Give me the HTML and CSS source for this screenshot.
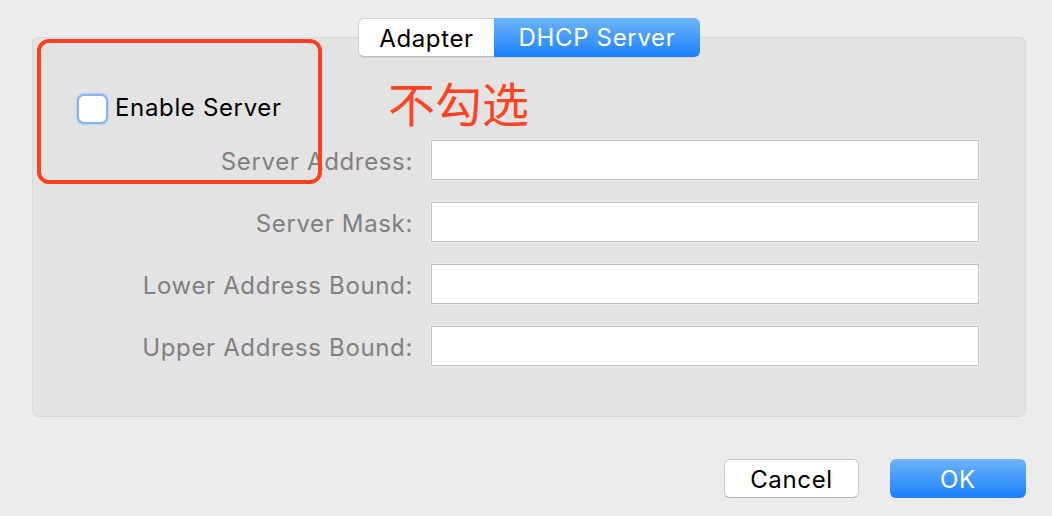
FILE: index.html
```html
<!DOCTYPE html>
<html>
<head>
<meta charset="utf-8">
<link rel="stylesheet" href="styles.css">
</head>
<body>
<div class="dialog">
  <div class="tabs">
    <div class="tab">Adapter</div>
    <div class="tab active">DHCP Server</div>
  </div>
  <div class="group">
    <label class="enable">
      <span class="checkbox"></span>
      <span>Enable Server</span>
    </label>
    <div class="fields">
      <div class="label">Server Address:</div><div class="input"></div>
      <div class="label">Server Mask:</div><div class="input"></div>
      <div class="label">Lower Address Bound:</div><div class="input"></div>
      <div class="label">Upper Address Bound:</div><div class="input"></div>
    </div>
  </div>
  <div class="buttons">
    <div class="btn">Cancel</div>
    <div class="btn primary">OK</div>
  </div>
  <div class="annot-box"></div>
  <div class="annot-text">不勾选</div>
</div>
</body>
</html>
```
FILE: styles.css
```css
html, body {
  margin: 0;
  padding: 0;
  background: #ececec;
  font-family: Inter, "Liberation Sans", Arial, sans-serif;
  letter-spacing: 0.65px;
}
.dialog {
  position: relative;
  width: 1052px;
  height: 516px;
  box-sizing: border-box;
  padding: 18px 26px 0 32px;
}
.tabs {
  display: flex;
  justify-content: center;
  position: relative;
  z-index: 2;
  height: 39px;
}
.tab {
  box-sizing: border-box;
  height: 39px;
  font-size: 24px;
  line-height: 40px;
  background: #fff;
  color: #000;
  border: 1px solid #cfcfcf;
  border-bottom-color: #bdbdbd;
  border-right: none;
  border-radius: 6px 0 0 6px;
  width: 136px;
  text-align: center;
  box-shadow: 0 1px 0 rgba(0,0,0,0.05);
}
.tab.active {
  width: 206px;
  border: none;
  border-radius: 0 6px 6px 0;
  color: #fff;
  background: linear-gradient(#6db4f9, #1b80fb);
  box-shadow: 0 1px 0 rgba(0,0,0,0.08);
}
.group {
  margin-top: -20px;
  box-sizing: border-box;
  height: 380px;
  background: #e3e3e3;
  border: 1px solid #d9d9d9;
  border-radius: 7px;
  padding: 54px 46px 0 0;
}
.enable {
  display: flex;
  align-items: center;
  gap: 7px;
  height: 31px;
  padding-left: 44px;
  font-size: 24px;
  line-height: 39px;
  color: #000;
}
.checkbox {
  box-sizing: border-box;
  width: 31px;
  height: 30px;
  margin-top: 2px;
  background: #fff;
  border: 2px solid #86b6f0;
  border-radius: 7px;
  box-shadow: 0 0 1px 1px rgba(120, 170, 240, 0.35);
}
.fields {
  margin-top: 17px;
  display: grid;
  grid-template-columns: 380px 1fr;
  grid-auto-rows: 40px;
  column-gap: 18px;
  row-gap: 22px;
}
.label {
  text-align: right;
  font-size: 24px;
  line-height: 43px;
  height: 40px;
  color: #808080;
}
.input {
  box-sizing: border-box;
  height: 40px;
  background: #fff;
  border: 1px solid #c0c0c0;
  box-shadow: 0 0 0 1px #eeeeee;
}
.buttons {
  display: flex;
  justify-content: flex-end;
  gap: 31px;
  margin-top: 42px;
}
.btn {
  box-sizing: border-box;
  width: 135px;
  height: 39px;
  font-size: 24px;
  line-height: 39px;
  text-align: center;
  background: #fff;
  border: 1px solid #cacaca;
  border-bottom-color: #b3b3b3;
  border-radius: 6px;
  color: #000;
}
.btn.primary {
  width: 136px;
  line-height: 41px;
  border: none;
  color: #fff;
  background: linear-gradient(#6db4f9, #1b80fb);
}
.annot-box {
  position: absolute;
  left: 37px;
  top: 39px;
  width: 285px;
  height: 145px;
  box-sizing: border-box;
  border: 4px solid #fc3f20;
  border-radius: 12px;
}
.annot-text {
  position: absolute;
  left: 388px;
  top: 71px;
  font-family: "Noto Sans CJK SC", sans-serif;
  font-size: 47px;
  line-height: 62px;
  letter-spacing: 0;
  color: #fc4424;
}
```
